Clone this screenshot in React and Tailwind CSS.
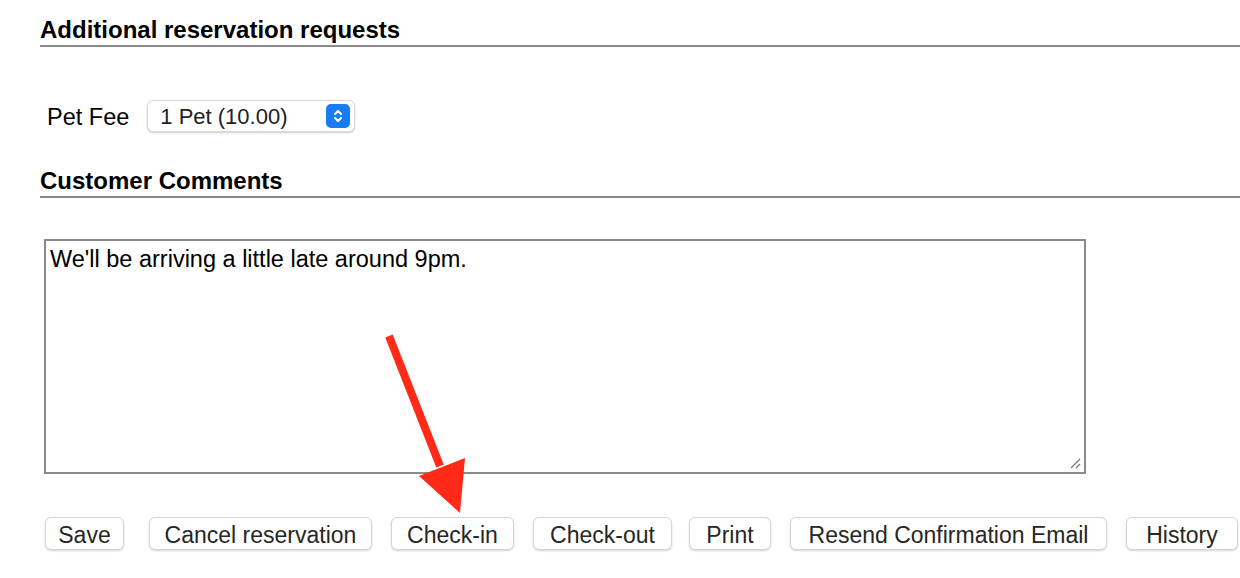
const font = { fontFamily: '"Liberation Sans", Arial, sans-serif' };

function Heading({ children }) {
  return (
    <div className="border-b-2 border-[#8a8a8a] pb-[2px]">
      <h2 className="text-[24px] font-bold leading-[26px] text-black">{children}</h2>
    </div>
  );
}

function Btn({ label, w }) {
  return (
    <button
      className="h-[33px] shrink-0 rounded-[6px] bg-white border border-[#d6d6d6] shadow-[0_1px_2px_rgba(0,0,0,0.18)] text-[23px] leading-none pt-[4px] text-[#262626] text-center"
      style={{ width: w }}
    >
      {label}
    </button>
  );
}

export default function App() {
  const buttons = [
    ["Save", 79],
    ["Cancel reservation", 223],
    ["Check-in", 123],
    ["Check-out", 139],
    ["Print", 82],
    ["Resend Confirmation Email", 317],
    ["History", 112],
  ];
  return (
    <div className="relative w-[1240px] h-[578px] bg-white overflow-hidden pl-[40px] pt-[17px]" style={font}>
      <Heading>Additional reservation requests</Heading>

      <div className="flex items-center mt-[53px] ml-[7px] h-[32px]">
        <span className="text-[23.5px] text-black pt-[3px]">Pet Fee</span>
        <div className="ml-[18px] w-[208px] h-[32px] rounded-[6px] bg-white border border-[#d9d9d9] shadow-[0_1px_2px_rgba(0,0,0,0.2)] flex items-center justify-between pl-[12px] pr-[4px]">
          <span className="text-[22px] text-[#222] pt-[1px]">1 Pet (10.00)</span>
          <span className="w-[24px] h-[24px] rounded-[5px] bg-[#1a7cf5] flex items-center justify-center">
            <svg width="12" height="16" viewBox="0 0 12 16" fill="none" stroke="white" strokeWidth="2" strokeLinecap="round" strokeLinejoin="round">
              <path d="M3 6 L6 3 L9 6" />
              <path d="M3 10 L6 13 L9 10" />
            </svg>
          </span>
        </div>
      </div>

      <div className="mt-[36px]">
        <Heading>Customer Comments</Heading>
      </div>

      <div className="mt-[41px] ml-[4px] w-[1042px] h-[235px] border-2 border-[#8a8a8a] bg-white relative px-[4px] pt-[5px]">
        <p className="text-[23.5px] text-black leading-[26px]">We'll be arriving a little late around 9pm.</p>
        <svg className="absolute right-[3px] bottom-[3px]" width="12" height="12" viewBox="0 0 12 12" stroke="#777" strokeWidth="1.3">
          <path d="M2 11 L11 2" />
          <path d="M7 11 L11 7" />
        </svg>
      </div>

      <div className="flex items-center gap-[19px] mt-[43px] ml-[5px]">
        {buttons.map(([b, w], i) => (
          <div key={b} className={i === 1 ? "ml-[6px] flex" : i === 4 ? "-ml-[2px] flex" : "flex"}>
            <Btn label={b} w={w} />
          </div>
        ))}
      </div>

      <svg className="absolute left-0 top-0 pointer-events-none" width="1240" height="578">
        <line x1="389" y1="336" x2="440" y2="466" stroke="#ff2a17" strokeWidth="8" />
        <polygon points="419,476 465,458 460,513" fill="#ff2a17" />
      </svg>
    </div>
  );
}
